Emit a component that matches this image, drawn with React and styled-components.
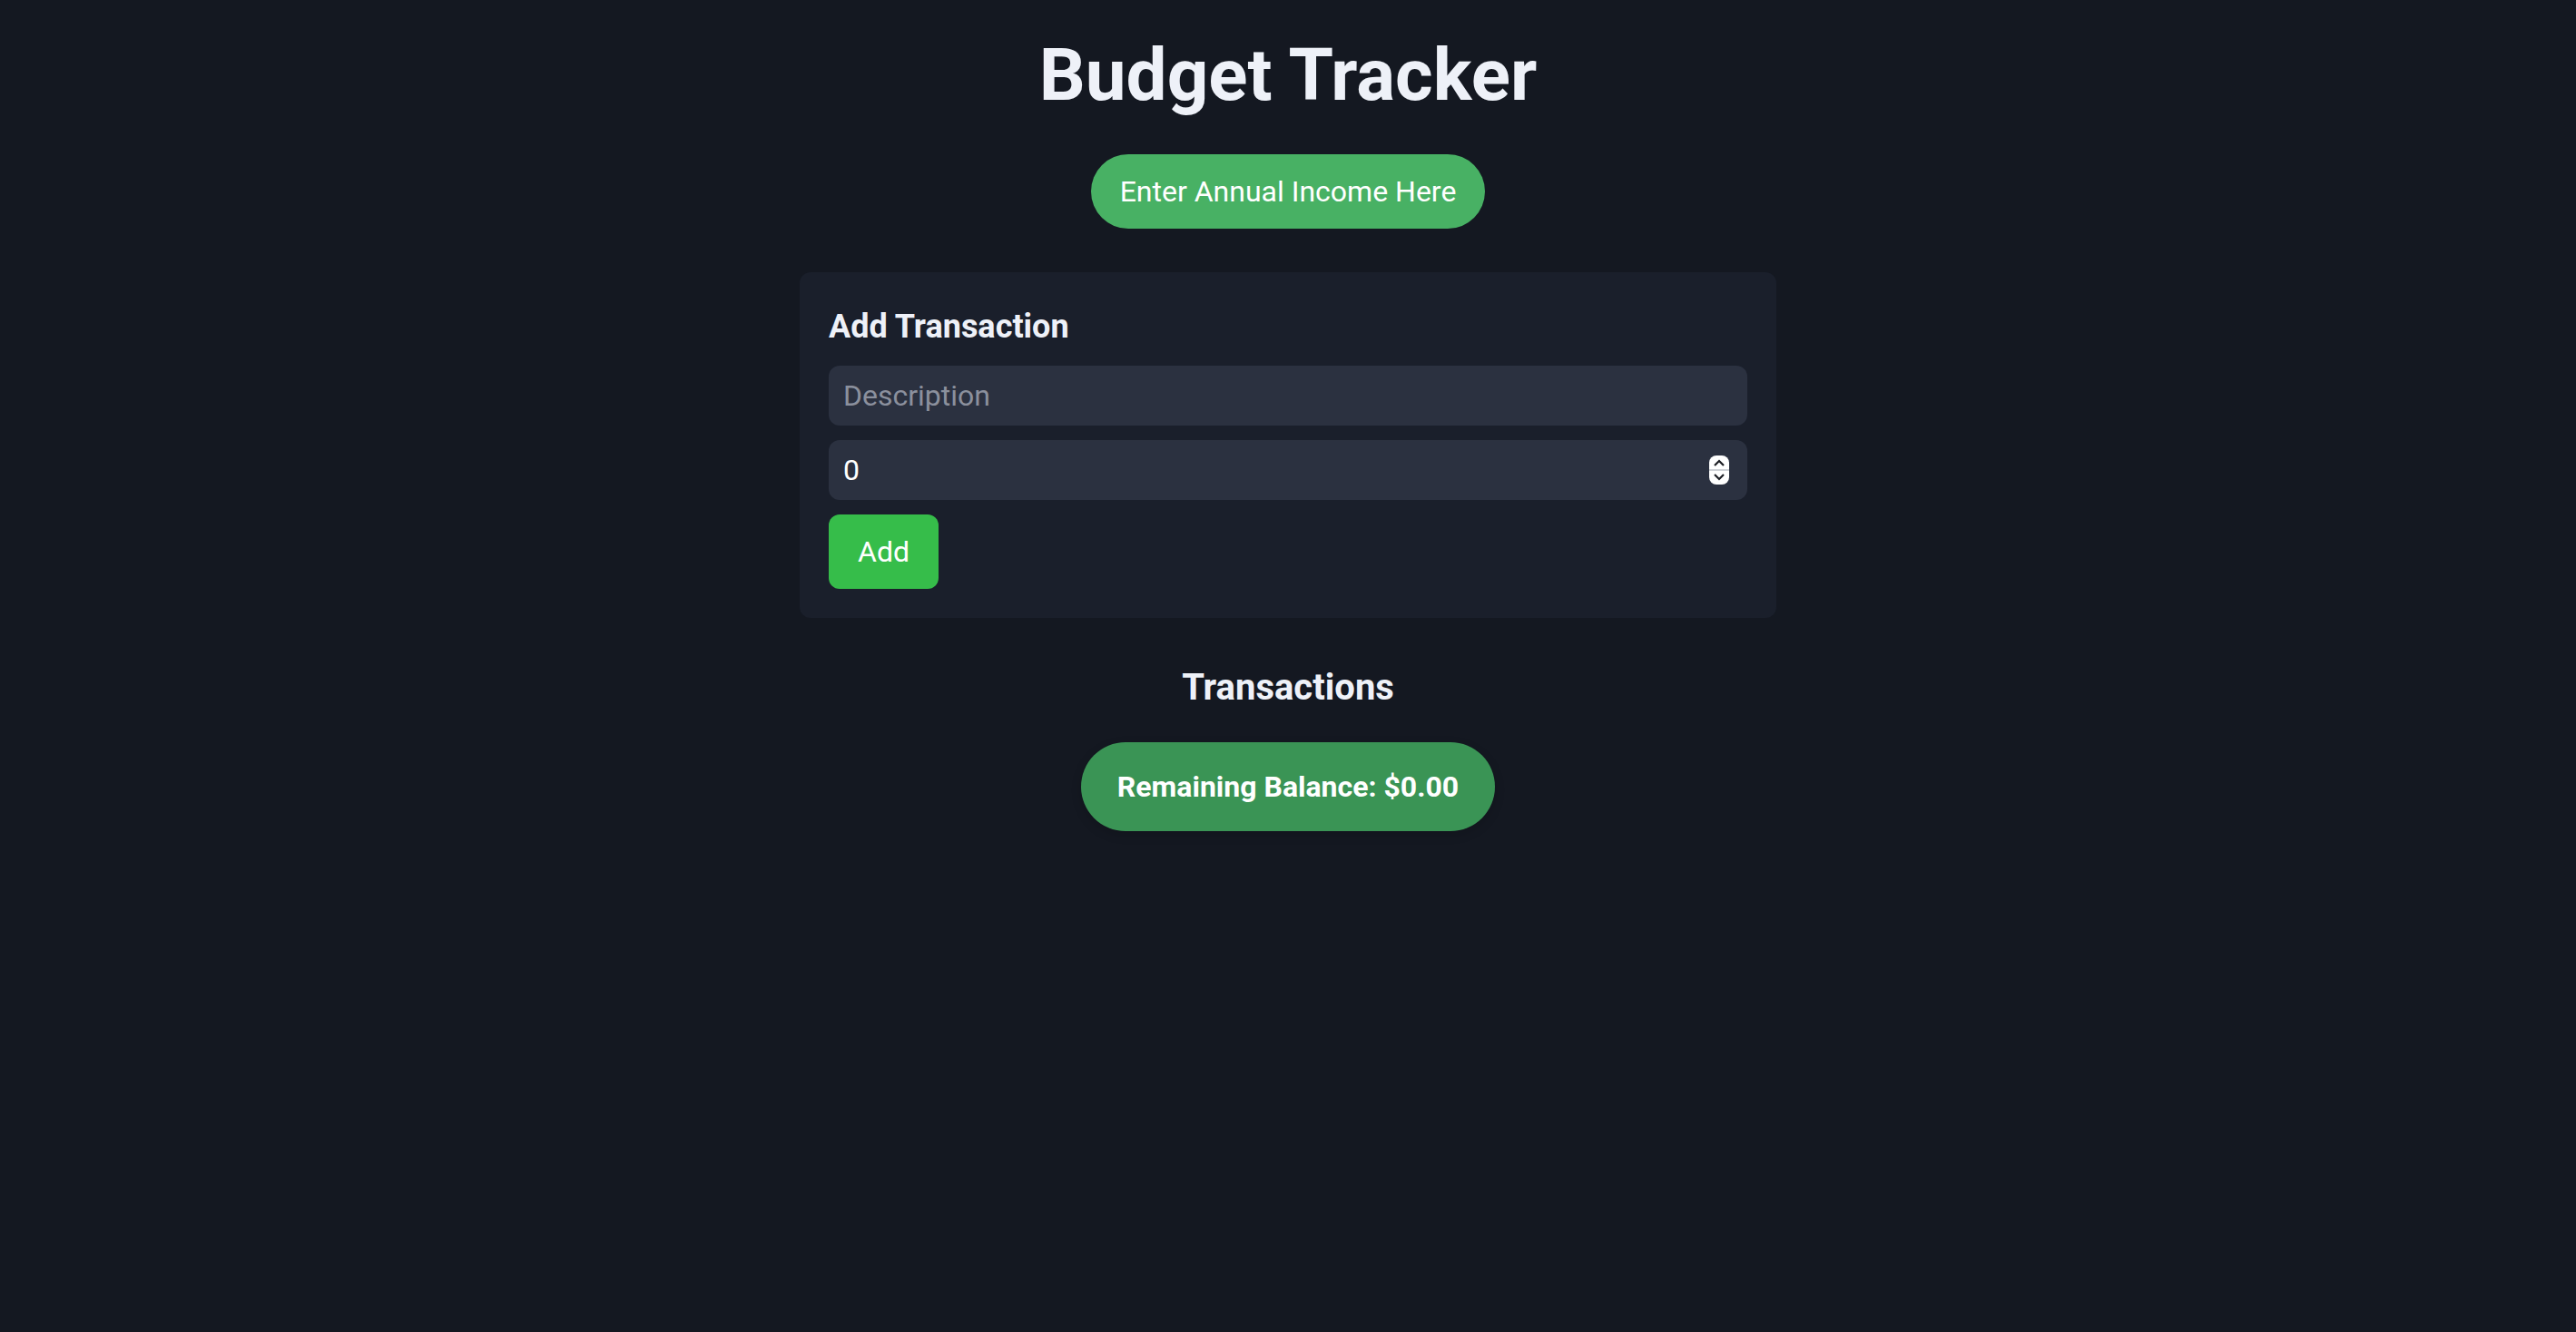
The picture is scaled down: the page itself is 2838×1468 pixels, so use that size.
import { useState } from "react";
import styled, { createGlobalStyle } from "styled-components";

const GlobalStyle = createGlobalStyle`
	body {
		margin: 0;
		background-color: #141821;
		font-family: Roboto, "Liberation Sans", sans-serif;
		color: #eef1f8;
	}
`;

const App = () => {
	const [description, setDescription] = useState("");
	const [amount, setAmount] = useState(0);

	return (
		<Page>
			<GlobalStyle />
			<Title>Budget Tracker</Title>
			<IncomeButton>Enter Annual Income Here</IncomeButton>
			<Card>
				<CardTitle>Add Transaction</CardTitle>
				<Input
					type="text"
					placeholder="Description"
					value={description}
					onChange={(e) => setDescription(e.target.value)}
				/>
				<NumberWrap>
					<Input
						type="number"
						value={amount}
						onChange={(e) => setAmount(e.target.value)}
					/>
					{/* native spin button is hidden, this one is drawn */}
					<Spinner>
						<svg width="22" height="32" viewBox="0 0 22 32">
							<rect x="0" y="0" width="22" height="32" rx="8" fill="#ffffff" />
							<line x1="0" y1="16" x2="22" y2="16" stroke="#cfd2d6" strokeWidth="2" />
							<polyline points="6,11 11,6 16,11" fill="none" stroke="#1d1f24" strokeWidth="2.2" />
							<polyline points="6,21 11,26 16,21" fill="none" stroke="#1d1f24" strokeWidth="2.2" />
						</svg>
					</Spinner>
				</NumberWrap>
				<AddButton>Add</AddButton>
			</Card>
			<SectionTitle>Transactions</SectionTitle>
			<Balance>Remaining Balance: $0.00</Balance>
		</Page>
	);
};

const Page = styled.div`
	display: flex;
	flex-direction: column;
	align-items: center;
	min-height: 100vh;
	padding-top: 36px;
	box-sizing: border-box;
`;
const Title = styled.h1`
	margin: 0 0 40px;
	font-size: 80px;
	font-weight: 700;
	color: #eef1f8;
`;
const IncomeButton = styled.button`
	border: none;
	border-radius: 999px;
	background-color: #48b164;
	color: #ffffff;
	font-family: Roboto, "Liberation Sans", sans-serif;
	font-size: 32px;
	padding: 22px 32px;
	cursor: pointer;
	margin-bottom: 48px;
`;
const Card = styled.div`
	width: 1076px;
	box-sizing: border-box;
	padding: 32px;
	background-color: #1a1f2b;
	border-radius: 12px;
	display: flex;
	flex-direction: column;
	align-items: flex-start;
	gap: 16px;
`;
const CardTitle = styled.h3`
	margin: 7px 0 6px;
	font-size: 36px;
	font-weight: 700;
	color: #eef1f8;
`;
const Input = styled.input`
	width: 100%;
	height: 66px;
	box-sizing: border-box;
	padding: 0 16px;
	border: none;
	border-radius: 12px;
	background-color: #2b3140;
	color: #ffffff;
	font-family: Roboto, "Liberation Sans", sans-serif;
	font-size: 32px;
	outline: none;
	&::placeholder {
		color: #8b909d;
	}
	&::-webkit-inner-spin-button,
	&::-webkit-outer-spin-button {
		-webkit-appearance: none;
		margin: 0;
	}
`;
const NumberWrap = styled.div`
	position: relative;
	width: 100%;
`;
const Spinner = styled.div`
	position: absolute;
	right: 20px;
	top: 17px;
	width: 22px;
	height: 32px;
	line-height: 0;
`;
const AddButton = styled.button`
	border: none;
	border-radius: 12px;
	background-color: #36bd4a;
	color: #ffffff;
	font-family: Roboto, "Liberation Sans", sans-serif;
	font-size: 32px;
	padding: 22px 32px;
	cursor: pointer;
`;
const SectionTitle = styled.h2`
	margin: 53px 0 37px;
	font-size: 40px;
	font-weight: 700;
	color: #eef1f8;
`;
const Balance = styled.div`
	border-radius: 999px;
	background-color: #3a9455;
	color: #ffffff;
	font-size: 32px;
	font-weight: 700;
	padding: 30px 40px;
	box-shadow: 0 4px 12px rgba(0, 0, 0, 0.15);
`;

export default App;
